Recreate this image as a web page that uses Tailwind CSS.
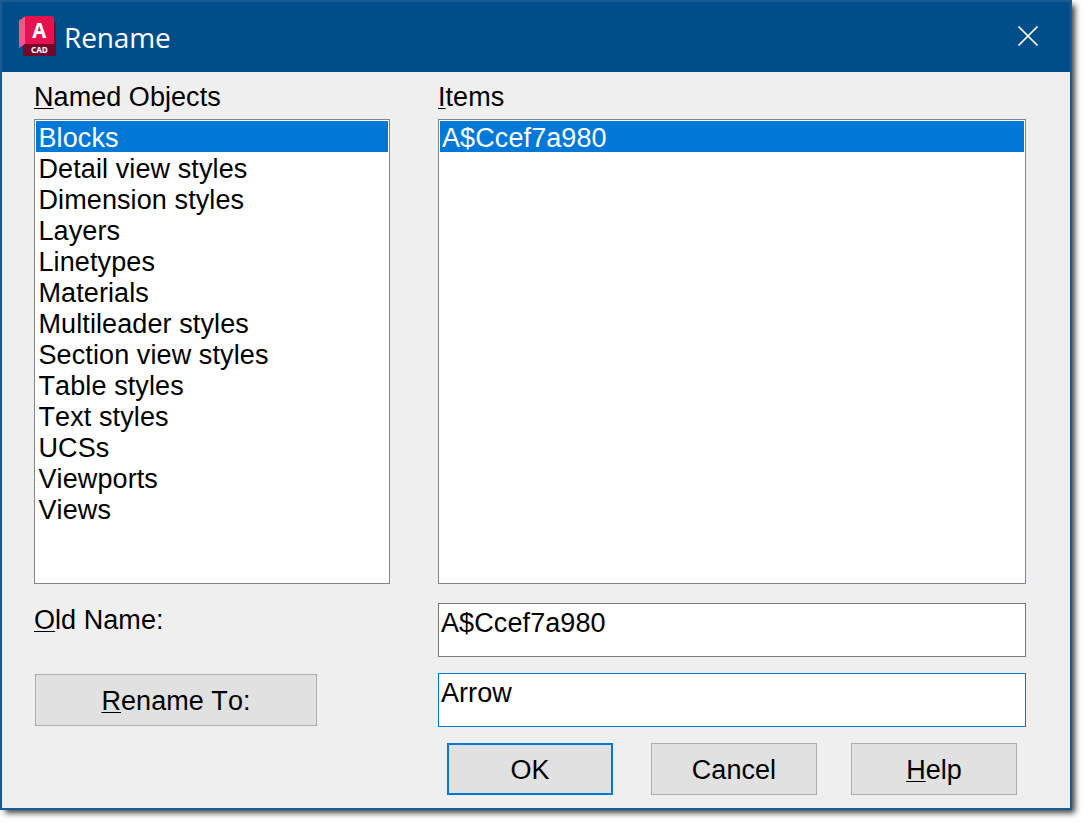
<!DOCTYPE html>
<html lang="en">
<head>
<meta charset="utf-8">
<title>Rename</title>
<script src="https://cdn.jsdelivr.net/npm/@tailwindcss/browser@4"></script>
</head>
<body class="h-[825px] w-[1087px] overflow-hidden bg-white">
<div class="flex h-[810px] w-[1072px] flex-col border-2 border-[#195b94] bg-[#efefef] font-['Liberation_Sans',Arial,sans-serif] text-[27px] leading-[31px] tracking-[0.05px] text-black shadow-[4px_4px_6px_-1px_rgba(0,0,0,0.75)] [font-kerning:none]">
  <header class="flex h-[70px] shrink-0 items-center bg-[#004e89] pl-[17px] pr-[31px]">
    <svg class="mb-0.5 h-10 w-[38px] shrink-0" viewBox="0 0 38 40">
      <path d="M6 27h31v11.500a1.500 1.500 0 0 1-1.500 1.500H6a2 2 0 0 1-2-2V29z" fill="#75062a"/>
      <path d="M34 6h1.500a1.500 1.500 0 0 1 1.500 1.500V30h-3z" fill="#750a30"/>
      <path d="M0 4.500 6 0.500V28L0 32z" fill="#f0588a"/>
      <path d="M6 0h27a2 2 0 0 1 2 2v26H6z" fill="#e6124f"/>
      <text x="20.300" y="22" text-anchor="middle" font-family="Noto Sans, sans-serif" font-size="22" font-weight="700" textLength="14" lengthAdjust="spacingAndGlyphs" letter-spacing="0" fill="#fff">A</text>
      <text x="20.400" y="36.700" text-anchor="middle" font-family="Noto Sans, sans-serif" font-size="9.500" font-weight="700" textLength="17" lengthAdjust="spacingAndGlyphs" letter-spacing="0" fill="#fff">CAD</text>
    </svg>
    <h1 class="ml-[7px] font-['Open_Sans',sans-serif] text-[28px] leading-[38px] tracking-[-0.15px] text-white">Rename</h1>
    <svg class="mb-0.5 ml-auto size-[22px]" viewBox="0 0 22 22" fill="none" stroke="#fff" stroke-width="1.700"><path d="M1.500 1.500l19 19M20.500 1.500l-19 19"/></svg>
  </header>
  <main class="grid grid-cols-[356px_588px] gap-x-12 pl-8 pt-[10px]">
    <label class="h-[37px]"><span class="underline decoration-1 underline-offset-2">N</span>amed Objects</label>
    <label class="h-[37px]"><span class="underline decoration-1 underline-offset-2">I</span>tems</label>
    <ul class="h-[465px] border border-[#828790] bg-white p-px tracking-[0.1px]">
      <li class="h-[31px] bg-[#0078d7] pl-[2.500px] pt-0.5 text-white">Blocks</li>
      <li class="h-[31px] pl-[2.500px] pt-0.5">Detail view styles</li>
      <li class="h-[31px] pl-[2.500px] pt-0.5">Dimension styles</li>
      <li class="h-[31px] pl-[2.500px] pt-0.5">Layers</li>
      <li class="h-[31px] pl-[2.500px] pt-0.5">Linetypes</li>
      <li class="h-[31px] pl-[2.500px] pt-0.5">Materials</li>
      <li class="h-[31px] pl-[2.500px] pt-0.5">Multileader styles</li>
      <li class="h-[31px] pl-[2.500px] pt-0.5">Section view styles</li>
      <li class="h-[31px] pl-[2.500px] pt-0.5">Table styles</li>
      <li class="h-[31px] pl-[2.500px] pt-0.5">Text styles</li>
      <li class="h-[31px] pl-[2.500px] pt-0.5">UCSs</li>
      <li class="h-[31px] pl-[2.500px] pt-0.5">Viewports</li>
      <li class="h-[31px] pl-[2.500px] pt-0.5">Views</li>
    </ul>
    <ul class="h-[465px] border border-[#828790] bg-white p-px tracking-[0.1px]">
      <li class="h-[31px] bg-[#0078d7] pl-0.5 pt-0.5 text-white">A$Ccef7a980</li>
    </ul>
    <label class="mt-[21px]"><span class="underline decoration-1 underline-offset-2">O</span>ld Name:</label>
    <div class="mt-[19px] h-[54px] border border-[#7a7a7a] bg-white pl-0.5 pt-1 tracking-[0.1px]">A$Ccef7a980</div>
    <button class="ml-px mt-[17px] h-[52px] w-[282px] border border-[#adadad] bg-[#e1e1e1] pt-0.5"><span class="underline decoration-1 underline-offset-2">R</span>ename To:</button>
    <div class="mt-4 h-[54px] border border-[#0078d7] bg-white pl-0.5 pt-1">Arrow</div>
    <div class="col-start-2 mt-4 flex pl-[9px]">
      <button class="h-[52px] w-[166px] border-2 border-[#0078d7] bg-[#e1e1e1] pt-0.5">OK</button>
      <button class="ml-[38px] h-[52px] w-[166px] border border-[#adadad] bg-[#e1e1e1] pt-0.5">Cancel</button>
      <button class="ml-[34px] h-[52px] w-[166px] border border-[#adadad] bg-[#e1e1e1] pt-0.5"><span class="underline decoration-1 underline-offset-2">H</span>elp</button>
    </div>
  </main>
</div>
</body>
</html>
